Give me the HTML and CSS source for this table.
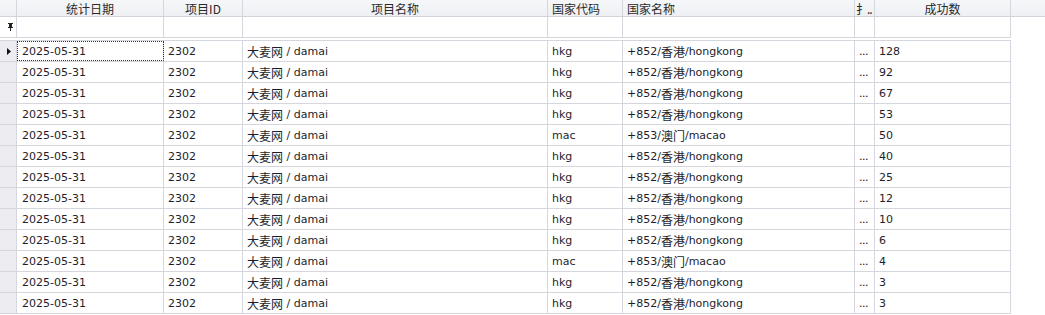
FILE: index.html
```html
<!DOCTYPE html>
<html>
<head>
<meta charset="utf-8">
<link rel="stylesheet" href="styles.css">
</head>
<body>
<div class="grid">
  <div class="hdr">
    <div class="c ind"></div>
    <div class="c c1 center">统计日期</div>
    <div class="c c2 center">项目ID</div>
    <div class="c c3 center">项目名称</div>
    <div class="c c4">国家代码</div>
    <div class="c c5">国家名称</div>
    <div class="c c6 clip">扌..</div>
    <div class="c c7 center">成功数</div>
  </div>
  <div class="row filter">
    <div class="c ind"><svg width="7" height="8" viewBox="0 0 7 8"><path d="M1 0h5v1h-1v3h1v1h-2v3h-1v-3h-2v-1h1v-3h-1z" fill="#222"/></svg></div>
    <div class="c c1"></div>
    <div class="c c2"></div>
    <div class="c c3"></div>
    <div class="c c4"></div>
    <div class="c c5"></div>
    <div class="c c6"></div>
    <div class="c c7"></div>
  </div>
  <div class="gap"></div>
  <div class="body" id="body"></div>
</div>
<script src="app.js"></script>
</body>
</html>
```
FILE: app.js
```js
const rows = [
  ["hkg","香港","hongkong","852",true,"128"],
  ["hkg","香港","hongkong","852",true,"92"],
  ["hkg","香港","hongkong","852",true,"67"],
  ["hkg","香港","hongkong","852",false,"53"],
  ["mac","澳门","macao","853",false,"50"],
  ["hkg","香港","hongkong","852",true,"40"],
  ["hkg","香港","hongkong","852",true,"25"],
  ["hkg","香港","hongkong","852",true,"12"],
  ["hkg","香港","hongkong","852",true,"10"],
  ["hkg","香港","hongkong","852",true,"6"],
  ["mac","澳门","macao","853",true,"4"],
  ["hkg","香港","hongkong","852",true,"3"],
  ["hkg","香港","hongkong","852",true,"3"]
];
const body = document.getElementById("body");
rows.forEach((r, i) => {
  const row = document.createElement("div");
  row.className = "row data";
  const ind = i === 0 ? '<svg width="4" height="7" viewBox="0 0 4 7"><path d="M0 0L4 3.5L0 7z" fill="#111"/></svg>' : "";
  row.innerHTML =
    '<div class="c ind">' + ind + '</div>' +
    '<div class="c c1 d1' + (i === 0 ? ' focus' : '') + '"><span>2025-05-31</span></div>' +
    '<div class="c c2">2302</div>' +
    '<div class="c c3"><span class="zh">大麦网</span>&nbsp;/ damai</div>' +
    '<div class="c c4">' + r[0] + '</div>' +
    '<div class="c c5">+' + r[3] + '/<span class="zh">' + r[1] + '</span>/' + r[2] + '</div>' +
    '<div class="c c6 dots">' + (r[4] ? '...' : '') + '</div>' +
    '<div class="c c7">' + r[5] + '</div>';
  body.appendChild(row);
});
```
FILE: styles.css
```css
html, body {
  margin: 0;
  padding: 0;
  background: #ffffff;
}
body {
  width: 1045px;
  height: 315px;
  overflow: hidden;
  font-family: "DejaVu Sans", "Noto Sans CJK SC", sans-serif;
  font-size: 11px;
  color: #1e1e2a;
}
.grid {
  display: flex;
  flex-direction: column;
}
.hdr {
  display: flex;
  height: 17px;
  background: linear-gradient(#f6f7f9, #eef0f4);
  border-bottom: 1px solid #d3d3dc;
  box-sizing: border-box;
  color: #2a2a2a;
  font-family: "Noto Sans CJK SC", "DejaVu Sans", sans-serif;
  font-size: 12px;
}
.row {
  display: flex;
  height: 21px;
  box-sizing: border-box;
}
.c {
  box-sizing: border-box;
  border-right: 1px solid #d6d6de;
  padding-left: 4px;
  white-space: nowrap;
  overflow: hidden;
  display: flex;
  align-items: center;
  flex: none;
}
.hdr .c { height: 16px; }
.center { justify-content: center; padding-left: 0; }
.ind { width: 17px; padding-left: 0; justify-content: center; }
.c1 { width: 147px; }
.c2 { width: 79px; }
.c3 { width: 305px; }
.c4 { width: 75px; }
.c5 { width: 232px; }
.c6 { width: 20px; padding-left: 2px; }
.c7 { width: 136px; }
.clip { padding-left: 1px; letter-spacing: -1px; }
.filter { width: 1011px; border-bottom: 1px solid #d6d6de; }
.filter .ind { justify-content: flex-start; padding-left: 7px; }
.gap { height: 3px; width: 1011px; border-bottom: 1px solid #d6d6de; box-sizing: border-box; }
.data { width: 1011px; border-bottom: 1px solid #d6d6de; }
.data .c { padding-top: 1px; }
.data .ind {
  background: #ececf1;
  justify-content: flex-start;
  padding-left: 7px;
  padding-top: 0;
}
.zh { font-size: 12px; font-family: "Noto Sans CJK SC", sans-serif; }
.d1 { padding-left: 5px; }
.focus { outline: 1px dotted #333; outline-offset: -1px; }
.dots { padding-left: 4px; letter-spacing: -0.5px; color: #111; }
```
